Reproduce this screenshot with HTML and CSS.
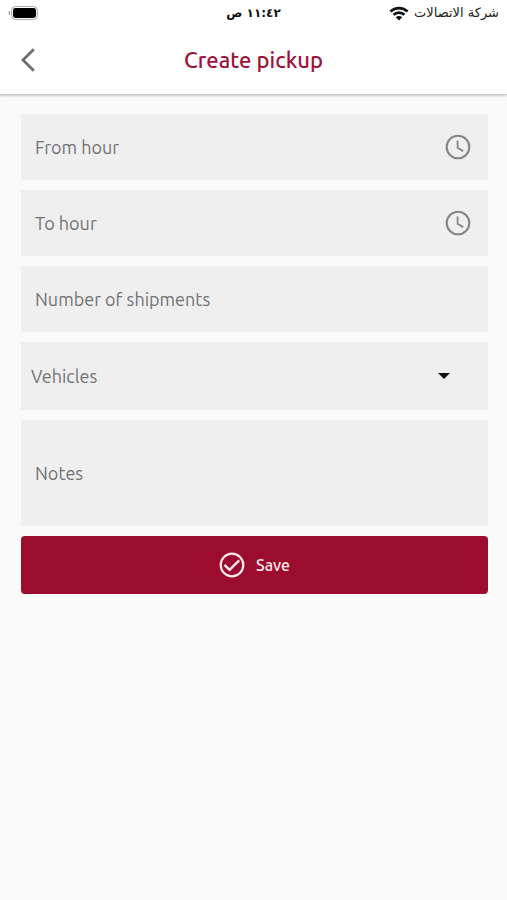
FILE: index.html
```html
<!DOCTYPE html>
<html lang="en">
<head>
<meta charset="utf-8">
<meta name="viewport" content="width=device-width, initial-scale=1">
<title>Create pickup</title>
<link rel="stylesheet" href="styles.css">
</head>
<body>
<header class="top">
  <div class="status" dir="rtl" lang="ar">
    <div class="carrier">
      <span>شركة الاتصالات</span>
      <svg class="wifi" viewBox="0 0 18 14" aria-hidden="true">
        <path d="M1 5.2a11.5 11.5 0 0 1 16 0M3.9 8.2a7.3 7.3 0 0 1 10.2 0" fill="none" stroke="#111" stroke-width="2.5"/>
        <path d="M9 13.6 6 10.6a4.3 4.3 0 0 1 6 0z" fill="#111"/>
      </svg>
    </div>
    <time class="clock">١١:٤٢ ص</time>
    <svg class="battery" viewBox="0 0 30 14" aria-hidden="true">
      <path d="M2 4.8v4.4A2.4 2.4 0 0 1 2 4.8z" fill="#999"/>
      <rect x="3.5" y=".5" width="26" height="13" rx="4" fill="#fff" stroke="#aaa"/>
      <rect x="5" y="2" width="23" height="10" rx="2.4" fill="#000"/>
    </svg>
  </div>
  <div class="bar">
    <button class="back" type="button" aria-label="Back">
      <svg viewBox="0 0 14 24" aria-hidden="true"><path d="M12.8 1.2 2 12l10.8 10.8" fill="none" stroke="#6d6d6d" stroke-width="2.8"/></svg>
    </button>
    <h1 class="title">Create pickup</h1>
  </div>
</header>
<main>
  <form class="form">
    <div class="field">
      <input class="control" type="text" placeholder="From hour" aria-label="From hour">
      <svg class="icon" viewBox="0 0 26 26" aria-hidden="true"><g fill="none" stroke="#858585"><circle cx="13" cy="13" r="11.3" stroke-width="2.1"/><path d="M12.6 6.5v7.3l5.6 3.3" stroke-width="1.8"/></g></svg>
    </div>
    <div class="field">
      <input class="control" type="text" placeholder="To hour" aria-label="To hour">
      <svg class="icon" viewBox="0 0 26 26" aria-hidden="true"><g fill="none" stroke="#858585"><circle cx="13" cy="13" r="11.3" stroke-width="2.1"/><path d="M12.6 6.5v7.3l5.6 3.3" stroke-width="1.8"/></g></svg>
    </div>
    <div class="field">
      <input class="control" type="text" inputmode="numeric" placeholder="Number of shipments" aria-label="Number of shipments">
    </div>
    <div class="field">
      <select class="control select" aria-label="Vehicles"><option>Vehicles</option></select>
      <svg class="caret" viewBox="0 0 12 6" aria-hidden="true"><path d="M0 0h12L6 6z" fill="#111"/></svg>
    </div>
    <div class="field">
      <textarea class="control notes" placeholder="Notes" aria-label="Notes"></textarea>
    </div>
    <button class="save" type="submit">
      <svg class="check" viewBox="0 0 26 26" aria-hidden="true"><g fill="none" stroke="#fbeaec"><circle cx="13" cy="13" r="11.3" stroke-width="2.2"/><path d="m5.4 12.8 5.2 5.1 9.6-9.6" stroke-width="2.4"/></g></svg>
      <span>Save</span>
    </button>
  </form>
</main>
</body>
</html>
```
FILE: styles.css
```css
* {
  box-sizing: border-box;
}

body {
  margin: 0;
  min-height: 100vh;
  background: #fafafa;
  font-family: Ubuntu, "Noto Sans", sans-serif;
}

.top {
  background: #fff;
  border-bottom: 1px solid #ccc;
  box-shadow: 0 1px 2px rgba(0, 0, 0, 0.2);
}

.status {
  display: grid;
  grid-template-columns: 1fr auto 1fr;
  align-items: center;
  height: 26px;
  padding: 0 8px;
  color: #222;
  font-family: "DejaVu Sans", sans-serif;
  font-size: 13px;
  line-height: 20px;
}

.carrier {
  display: flex;
  align-items: center;
  gap: 5px;
}

.wifi {
  width: 20px;
  height: 15px;
}

.clock {
  color: #111;
  font-size: 12px;
  font-weight: 700;
}

.battery {
  width: 30px;
  height: 14px;
  justify-self: end;
}

.bar {
  display: grid;
  grid-template-columns: 56px 1fr 56px;
  align-items: center;
  height: 68px;
}

.back {
  display: flex;
  align-items: center;
  height: 48px;
  padding: 0 0 0 21px;
  border: 0;
  background: none;
}

.back svg {
  width: 14px;
  height: 24px;
}

.title {
  margin: 0;
  color: #9d1239;
  font-size: 22px;
  font-weight: 500;
  line-height: 28px;
  text-align: center;
}

.form {
  display: flex;
  flex-direction: column;
  gap: 10px;
  padding: 19px 19px 20px 21px;
}

.field {
  display: flex;
  align-items: center;
  background: #efefef;
}

.control {
  flex: 1;
  min-width: 0;
  height: 66px;
  padding: 0 14px;
  border: 0;
  border-radius: 0;
  background: none;
  color: #737373;
  font-family: inherit;
  font-size: 18px;
  line-height: 24px;
}

.control::placeholder {
  color: #737373;
  opacity: 1;
}

.icon {
  width: 26px;
  height: 26px;
  margin-right: 17px;
}

.select {
  height: 68px;
  padding: 0 10px;
  appearance: none;
}

.caret {
  width: 12px;
  height: 6px;
  margin-right: 38px;
}

.notes {
  height: 106px;
  padding: 41px 14px;
  resize: none;
}

.save {
  display: flex;
  align-items: center;
  justify-content: center;
  gap: 11px;
  height: 58px;
  border: 0;
  border-radius: 4px;
  background: #9b0c2e;
  color: #fbeaec;
  font-family: inherit;
  font-size: 16px;
  font-weight: 500;
  line-height: 20px;
}

.check {
  width: 26px;
  height: 26px;
}
```
